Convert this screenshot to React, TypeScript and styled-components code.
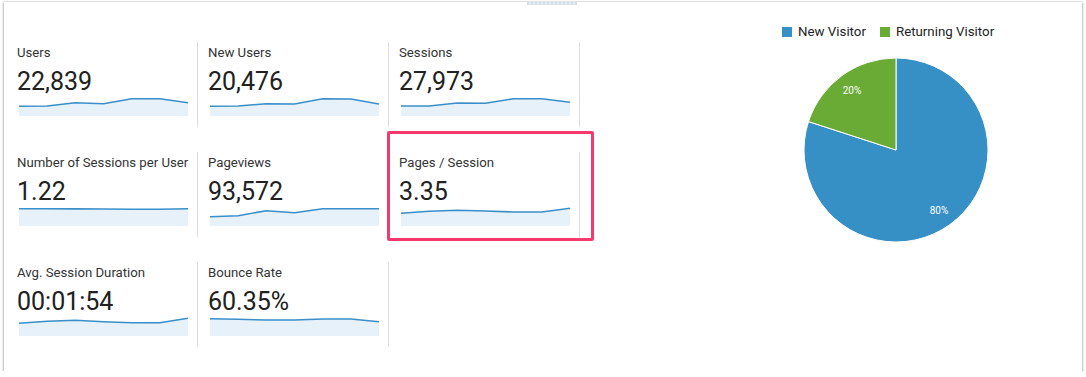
import React from 'react';
import styled, { createGlobalStyle } from 'styled-components';

/*
    Audience overview card
    metric tiles with sparklines on the left, visitor pie on the right
*/

const GlobalStyle = createGlobalStyle`
  html, body {
    margin: 0;
    padding: 0;
    background: #ffffff;
    font-family: Roboto, 'Liberation Sans', Arial, sans-serif;
  }
`;

type Metric = {
  label: string;
  value: string;
  points: number[];
  highlight?: boolean;
};

const metrics: Metric[] = [
  { label: 'Users', value: '22,839', points: [9.3, 9, 5.7, 6.7, 1.7, 1.7, 5.7] },
  { label: 'New Users', value: '20,476', points: [9.3, 9, 6.7, 7, 1.7, 2, 7] },
  { label: 'Sessions', value: '27,973', points: [9, 9, 6, 6.3, 1.7, 1.7, 5.3] },
  { label: 'Number of Sessions per User', value: '1.22', points: [1.7, 1.7, 1.9, 2, 2.2, 2.2, 1.7] },
  { label: 'Pageviews', value: '93,572', points: [9.7, 8.7, 3.7, 5.7, 1.7, 1.7, 1.7] },
  { label: 'Pages / Session', value: '3.35', points: [6.3, 4.3, 3.3, 4, 5, 5, 1.3], highlight: true },
  { label: 'Avg. Session Duration', value: '00:01:54', points: [6.3, 4.3, 3.3, 4.7, 5.7, 5.7, 1.3] },
  { label: 'Bounce Rate', value: '60.35%', points: [1.7, 2.3, 3, 3, 2, 2, 4.7] },
];

const SPARK_W = 169;
const SPARK_H = 19;

function Sparkline({ points }: { points: number[] }) {
  const step = SPARK_W / (points.length - 1);
  const line = points.map((y, i) => `${(i * step).toFixed(1)},${y}`).join(' ');
  const area = `0,${SPARK_H} ${line} ${SPARK_W},${SPARK_H}`;
  return (
    <SparkSvg width={SPARK_W} height={SPARK_H} viewBox={`0 0 ${SPARK_W} ${SPARK_H}`}>
      <polygon points={area} fill="#e6f1f9" />
      <polyline points={line} fill="none" stroke="#3b8fc9" strokeWidth="1.6" strokeLinejoin="round" />
    </SparkSvg>
  );
}

function VisitorPie() {
  return (
    <svg width="184" height="184" viewBox="0 0 184 184">
      <path d="M92,92 L92,0 A92,92 0 1 1 4.5,63.6 Z" fill="#3690c6" stroke="#ffffff" strokeWidth="1" />
      <path d="M92,92 L92,0 A92,92 0 0 0 4.5,63.6 Z" fill="#6aab36" stroke="#ffffff" strokeWidth="1" />
      <PieLabel x="48" y="36">20%</PieLabel>
      <PieLabel x="135" y="156">80%</PieLabel>
    </svg>
  );
}

function App() {
  return (
    <>
      <GlobalStyle />
      <Card>
        <TopTab />
        <MetricGrid>
          {metrics.map(m => (
            <Tile key={m.label} highlight={!!m.highlight}>
              <Label>{m.label}</Label>
              <Value>{m.value}</Value>
              <Sparkline points={m.points} />
            </Tile>
          ))}
        </MetricGrid>
        <ChartPanel>
          <Legend>
            <LegendItem>
              <Swatch color="#3690c6" />
              New Visitor
            </LegendItem>
            <LegendItem>
              <Swatch color="#6aab36" />
              Returning Visitor
            </LegendItem>
          </Legend>
          <PieBox>
            <VisitorPie />
          </PieBox>
        </ChartPanel>
      </Card>
    </>
  );
}

const Card = styled.div`
  position: relative;
  display: flex;
  box-sizing: border-box;
  width: 1078px;
  height: 369px;
  margin: 2px 0 0 4px;
  padding: 40px 0 0 3px;
  background: #ffffff;
  box-shadow: 0 2px 1px rgba(0, 0, 0, 0.3), 0 1px 2px 1px rgba(0, 0, 0, 0.22), 0 -1px 1px rgba(0, 0, 0, 0.04);
`;

const TopTab = styled.div`
  position: absolute;
  top: 0;
  left: 523px;
  width: 50px;
  height: 3px;
  background: repeating-linear-gradient(90deg, #d3dee6 0 2px, #e6edf2 2px 4px);
`;

const MetricGrid = styled.div`
  display: grid;
  grid-template-columns: repeat(3, 191px);
  grid-auto-rows: 85px;
  row-gap: 25px;
  align-content: start;
`;

const Tile = styled.div<{ highlight: boolean }>`
  position: relative;
  display: flex;
  flex-direction: column;
  box-sizing: border-box;
  padding: 3px 10px 0 10px;
  border-right: 1px solid #dddddd;

  &::after {
    content: '';
    display: ${props => (props.highlight ? 'block' : 'none')};
    position: absolute;
    top: -21px;
    left: -2px;
    right: -15px;
    bottom: -4px;
    border: 3px solid #f7386c;
    border-radius: 2px;
  }
`;

const Label = styled.div`
  font-size: 13.2px;
  line-height: 16px;
  color: #333333;
  white-space: nowrap;
`;

const Value = styled.div`
  margin-top: 6px;
  font-size: 25px;
  line-height: 30px;
  color: #212121;
`;

const SparkSvg = styled.svg`
  display: block;
  margin-left: 2px;
`;

const ChartPanel = styled.div`
  display: flex;
  flex-direction: column;
  margin-left: 202px;
  padding-top: 22px;
  margin-top: -40px;
`;

const Legend = styled.div`
  display: flex;
  gap: 14px;
`;

const LegendItem = styled.div`
  display: flex;
  align-items: center;
  gap: 6px;
  font-size: 13.3px;
  line-height: 16px;
  color: #222222;
`;

const Swatch = styled.span<{ color: string }>`
  width: 10px;
  height: 10px;
  background: ${props => props.color};
`;

const PieBox = styled.div`
  margin: 18px 0 0 22px;
  line-height: 0;
`;

const PieLabel = styled.text`
  font-family: Roboto, 'Liberation Sans', Arial, sans-serif;
  font-size: 10px;
  fill: #ffffff;
  text-anchor: middle;
`;

export default App;
